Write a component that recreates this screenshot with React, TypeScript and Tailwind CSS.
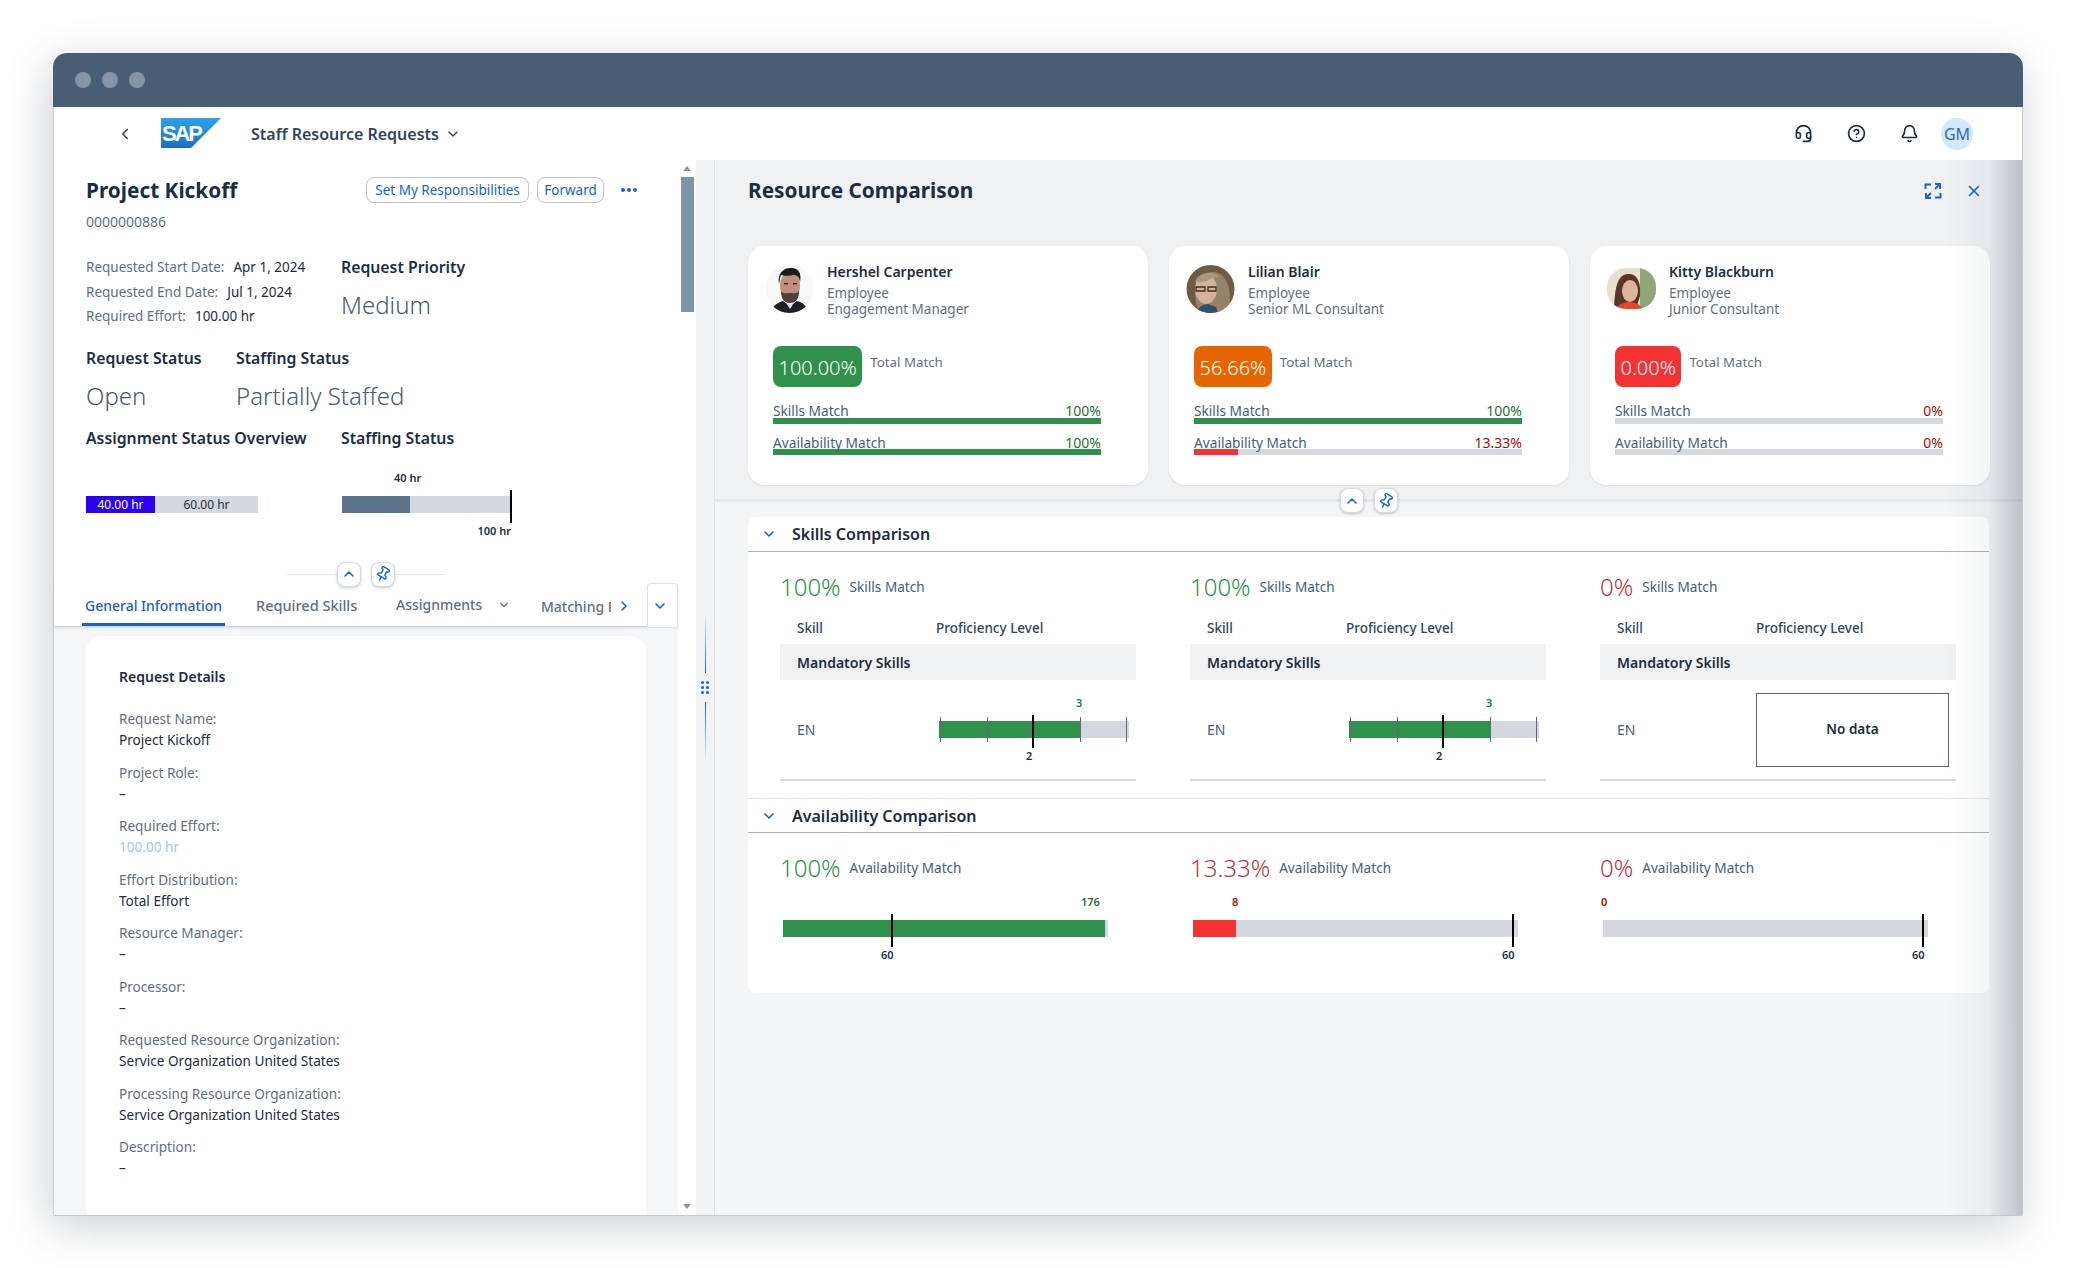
import { Bell, ChevronDown, ChevronLeft, ChevronRight, ChevronUp, CircleHelp, Headset, Pin, X } from "lucide-react";

type Tone = "good" | "warn" | "bad";

const toneBadge: Record<Tone, string> = {
  good: "bg-[#30914c]",
  warn: "bg-[#e76500]",
  bad: "bg-[#f53232]",
};

const toneText: Record<Tone, string> = {
  good: "text-[#256f3a]",
  warn: "text-[#aa0808]",
  bad: "text-[#aa0808]",
};

const barFill: Record<Tone, string> = {
  good: "bg-[#30914c]",
  warn: "bg-[#f53232]",
  bad: "bg-[#f53232]",
};

function SapLogo() {
  return (
    <svg width="60" height="31" viewBox="0 0 60 31" className="shrink-0">
      <defs>
        <linearGradient id="sap" x1="0" y1="0" x2="0" y2="1">
          <stop offset="0" stopColor="#2aa4ea" />
          <stop offset="1" stopColor="#1a6fc2" />
        </linearGradient>
      </defs>
      <polygon points="0,0 60,0 30,30 0,30" fill="url(#sap)" />
      <text x="1" y="23" fontSize="22" fontWeight="800" fill="#fff" fontFamily="'Liberation Sans', sans-serif" letterSpacing="-2.2">
        SAP
      </text>
    </svg>
  );
}

function ExpandIcon() {
  return (
    <svg width="18" height="18" viewBox="0 0 18 18" fill="none" stroke="#1b63c9" strokeWidth="1.9">
      <path d="M1.5 7V2.5H7" />
      <path d="M16.5 11v4.5H11" />
      <path d="M11 2h5v5M16 2l-5 5" />
      <path d="M7 16H2v-5M2 16l5-5" />
    </svg>
  );
}

function Avatar({ who }: { who: 0 | 1 | 2 }) {
  const id = `clip${who}`;
  return (
    <svg width="49" height="48" viewBox="0 0 49 48" className="shrink-0">
      <defs>
        <clipPath id={id}>
          {who === 2 ? <rect x="0" y="3" width="49" height="41" rx="19" /> : <circle cx="24.5" cy="24" r="24" />}
        </clipPath>
        <filter id={`soft${who}`}>
          <feGaussianBlur stdDeviation="0.6" />
        </filter>
      </defs>
      {who === 0 && (
        <g clipPath={`url(#${id})`}>
          <rect width="49" height="48" fill="#f7f8f8" />
          <g filter={`url(#soft${who})`}>
            <path d="M6 48c1-8 8-11 12-12l7 5 7-5c5 1 10 4 11 12z" fill="#1e2226" />
            <path d="M20 36l5 8 5-8z" fill="#e9e6e3" />
            <ellipse cx="25" cy="21" rx="10" ry="14" fill="#c0917a" />
            <path d="M16 26c0 8 3 12 9 12s9-4 9-12c-2 3-5 2-9 2s-7 1-9-2z" fill="#4f423d" />
            <path d="M14 19c-2-11 5-17 13-16 6 0 10 5 8 14-1-5-3-7-6-7-5 1-10 1-13 0-1 2-1 5-2 9z" fill="#1f1d1d" />
            <rect x="19" y="18" width="4" height="1.4" fill="#33292a" />
            <rect x="28" y="18" width="4" height="1.4" fill="#33292a" />
          </g>
        </g>
      )}
      {who === 1 && (
        <g clipPath={`url(#${id})`}>
          <rect width="49" height="48" fill="#6f5a45" />
          <g filter={`url(#soft${who})`}>
            <path d="M14 48c-8-12-7-38 11-41 17-1 22 20 17 41z" fill="#94836b" />
            <ellipse cx="20" cy="24" rx="11" ry="15" fill="#d3b19c" />
            <path d="M9 17c3-9 16-13 25-5-5 0-10 1-13 4-4 1-8 1-12 1z" fill="#a8987f" />
            <path d="M10 22h9v4h-9zM22 22h8v4h-8z" fill="none" stroke="#3a3028" strokeWidth="1.3" />
            <path d="M10 48c2-6 6-8 12-9l8 3 2 6z" fill="#2e4f6e" />
          </g>
        </g>
      )}
      {who === 2 && (
        <g clipPath={`url(#${id})`}>
          <rect width="49" height="48" fill="#e8e0cc" />
          <g filter={`url(#soft${who})`}>
            <rect x="33" y="0" width="16" height="48" fill="#8fa778" />
            <path d="M7 44c1-18 2-34 14-35 11-1 13 12 12 22l-4 13z" fill="#5c3526" />
            <ellipse cx="23" cy="26" rx="8" ry="11" fill="#dfb49c" />
            <path d="M8 44c4-5 8-7 15-7 6 0 10 3 13 7z" fill="#e2492a" />
          </g>
        </g>
      )}
    </svg>
  );
}

function RoundBtn({ children }: { children: React.ReactNode }) {
  return (
    <button className="flex h-[25px] w-[24px] items-center justify-center rounded-lg border border-[#d5dadf] bg-white text-[#1b63c9] shadow-[0_1px_3px_rgba(40,60,80,0.25)]">
      {children}
    </button>
  );
}

function CollapseButtons() {
  return (
    <div className="flex items-center gap-[10px]">
      <RoundBtn>
        <ChevronUp size={16} strokeWidth={2.4} />
      </RoundBtn>
      <RoundBtn>
        <Pin size={16} strokeWidth={2.2} className="rotate-[30deg]" />
      </RoundBtn>
    </div>
  );
}

function Field({ label, value, link }: { label: string; value: string; link?: boolean }) {
  return (
    <div className="h-[53.5px] text-[13.6px] leading-[21px]">
      <div className="text-[#5f6f80]">{label}</div>
      <div className={link ? "text-[#a3c8ee]" : "text-[#1d2d3e]"}>{value}</div>
    </div>
  );
}

function LeftPanel() {
  return (
    <div className="flex w-[642px] shrink-0 bg-white">
      <div className="flex w-[624px] flex-col">
        <div className="pl-[32px]">
          <div className="mt-[17px] flex h-[26px] items-center">
            <h1 className="w-[280px] pt-[1px] text-[20.8px] font-bold text-[#1d2d3e]">Project Kickoff</h1>
            <button className="h-[26px] w-[163px] rounded-lg border border-[#bcc3ca] pt-[1px] text-[13.5px] whitespace-nowrap text-[#1b63c9]">Set My Responsibilities</button>
            <button className="ml-[8px] h-[26px] w-[67px] rounded-lg border border-[#bcc3ca] pt-[1px] text-[13.5px] text-[#1b63c9]">Forward</button>
            <div className="ml-[17px] flex gap-[2px]">
              <span className="h-[4px] w-[4px] rounded-full bg-[#1b63c9]" />
              <span className="h-[4px] w-[4px] rounded-full bg-[#1b63c9]" />
              <span className="h-[4px] w-[4px] rounded-full bg-[#1b63c9]" />
            </div>
          </div>
          <div className="mt-[10px] h-[18px] text-[14px] leading-[18px] text-[#5f6f80]">0000000886</div>

          <div className="mt-[24px] flex">
            <div className="w-[255px] text-[13.5px] leading-[24.5px]">
              <div>
                <span className="text-[#5f6f80]">Requested Start Date:</span>
                <span className="ml-[9px] text-[#1d2d3e]">Apr 1, 2024</span>
              </div>
              <div>
                <span className="text-[#5f6f80]">Requested End Date:</span>
                <span className="ml-[9px] text-[#1d2d3e]">Jul 1, 2024</span>
              </div>
              <div>
                <span className="text-[#5f6f80]">Required Effort:</span>
                <span className="ml-[9px] text-[#1d2d3e]">100.00 hr</span>
              </div>
            </div>
            <div>
              <div className="h-[24px] text-[15.8px] leading-[24px] font-semibold text-[#1d2d3e]">Request Priority</div>
              <div className="mt-[10px] h-[32px] text-[24px] leading-[32px] font-light text-[#4a5a6a]">Medium</div>
            </div>
          </div>

          <div className="mt-[17.5px] flex">
            <div className="w-[150px]">
              <div className="h-[24px] text-[15.8px] leading-[24px] font-semibold text-[#1d2d3e]">Request Status</div>
              <div className="mt-[10px] h-[32px] text-[24px] leading-[32px] font-light text-[#4a5a6a]">Open</div>
            </div>
            <div>
              <div className="h-[24px] text-[15.8px] leading-[24px] font-semibold text-[#1d2d3e]">Staffing Status</div>
              <div className="mt-[10px] h-[32px] text-[24px] leading-[32px] font-light text-[#4a5a6a]">Partially Staffed</div>
            </div>
          </div>

          <div className="mt-[14px] flex">
            <div className="w-[255px]">
              <div className="h-[24px] text-[15.8px] leading-[24px] font-semibold text-[#1d2d3e]">Assignment Status Overview</div>
              <div className="mt-[46px] flex h-[17px] w-[172px] text-[12px] leading-[17px]">
                <div className="w-[69px] bg-[#2b00f0] text-center text-white">40.00 hr</div>
                <div className="flex-1 bg-[#d3d9df] text-center text-[#1d2d3e]">60.00 hr</div>
              </div>
            </div>
            <div>
              <div className="h-[24px] text-[15.8px] leading-[24px] font-semibold text-[#1d2d3e]">Staffing Status</div>
              <div className="relative mt-[46px] ml-[1px] h-[17px] w-[169px] bg-[#d3d9df]">
                <div className="h-full w-[68px] bg-[#5b738b]" />
                <div className="absolute top-[-6px] right-[-1px] h-[33px] w-[2px] bg-black" />
                <span className="absolute top-[-26px] left-[52px] text-[11px] leading-[16px] font-semibold text-[#1d2d3e]">40 hr</span>
                <span className="absolute top-[27px] right-0 text-[11px] leading-[16px] font-semibold whitespace-nowrap text-[#1d2d3e]">100 hr</span>
              </div>
            </div>
          </div>
        </div>

        <div className="mt-[49px] flex h-[24px] items-center justify-center">
          <div className="h-px w-[50px] bg-[#e6e8ea]" />
          <CollapseButtons />
          <div className="h-px w-[50px] bg-[#e6e8ea]" />
        </div>

        <div className="relative -mt-[3px] flex h-[44px] items-stretch border-b border-[#d3d8dc] pl-[28px] text-[14px] font-medium shadow-[0_1px_2px_rgba(40,60,80,0.12)]">
          <div className="flex w-[143px] items-center justify-center border-b-[3px] border-[#1b63c9] pt-[5px] whitespace-nowrap text-[#1b63c9]">General Information</div>
          <div className="ml-[31px] flex w-[103px] items-center pt-[3px] text-[14.5px] whitespace-nowrap text-[#5f6f80]">Required Skills</div>
          <div className="ml-[37px] flex w-[115px] items-center whitespace-nowrap text-[#5f6f80]">
            Assignments
            <ChevronDown size={14} className="ml-auto" />
          </div>
          <div className="ml-[30px] flex w-[91px] items-center pt-[3px] text-[#5f6f80]">
            <span className="w-[70px] overflow-hidden whitespace-nowrap">Matching R</span>
            <ChevronRight size={16} strokeWidth={2.4} className="ml-auto text-[#1b63c9]" />
          </div>
          <div className="absolute top-0 right-0 flex h-[44px] w-[31px] items-center justify-center rounded-t-sm border border-b-0 border-[#dfe3e6] bg-white pr-[6px] text-[#1b63c9]">
            <ChevronDown size={16} strokeWidth={2.4} />
          </div>
        </div>

        <div className="flex-1 overflow-hidden bg-[#f4f6f7] px-[32px] pt-[9px]">
          <div className="h-full w-[560px] rounded-t-2xl bg-white pt-[31px] pl-[33px]">
            <div className="h-[20px] text-[14px] leading-[20px] font-semibold text-[#1d2d3e]">Request Details</div>
            <div className="mt-[21px]">
              <Field label="Request Name:" value="Project Kickoff" />
              <Field label="Project Role:" value="–" />
              <Field label="Required Effort:" value="100.00 hr" link />
              <Field label="Effort Distribution:" value="Total Effort" />
              <Field label="Resource Manager:" value="–" />
              <Field label="Processor:" value="–" />
              <Field label="Requested Resource Organization:" value="Service Organization United States" />
              <Field label="Processing Resource Organization:" value="Service Organization United States" />
              <Field label="Description:" value="–" />
            </div>
          </div>
        </div>
      </div>

      <div className="flex w-[18px] flex-col items-center">
        <div className="mt-[6px] h-0 w-0 border-x-[4px] border-b-[5px] border-x-transparent border-b-[#8a97a3]" />
        <div className="mt-[6px] h-[135px] w-[13px] bg-[#7b93ab]" />
        <div className="mt-auto mb-[6px] h-0 w-0 border-x-[4px] border-t-[5px] border-x-transparent border-t-[#8a97a3]" />
      </div>
    </div>
  );
}

function Splitter() {
  return (
    <div className="flex w-[18px] shrink-0 flex-col items-center justify-center gap-[8px] bg-[#f0f2f4]">
      <div className="h-[60px] w-px bg-gradient-to-b from-transparent to-[#1b63c9]" />
      <div className="grid grid-cols-2 gap-[2px]">
        {[0, 1, 2, 3, 4, 5].map((i) => (
          <span key={i} className="h-[3px] w-[3px] rounded-full bg-[#1b63c9]" />
        ))}
      </div>
      <div className="h-[60px] w-px bg-gradient-to-t from-transparent to-[#1b63c9]" />
    </div>
  );
}

function MatchRow({ label, value, pct, tone, h }: { label: string; value: string; pct: number; tone: Tone; h: string }) {
  return (
    <div>
      <div className={`flex justify-between ${h}`}>
        <span className="text-[13.7px] text-[#475e75]">{label}</span>
        <span className={`text-[14px] ${toneText[tone]}`}>{value}</span>
      </div>
      <div className="h-[6px] bg-[#d3d9df]">
        <div className={`h-full ${barFill[tone]}`} style={{ width: `${pct}%` }} />
      </div>
    </div>
  );
}

const people = [
  { name: "Hershel Carpenter", role: "Engagement Manager", total: "100.00%", tone: "good" as Tone, skills: 100, avail: 100, availLabel: "100%", skillTone: "good" as Tone, availTone: "good" as Tone },
  { name: "Lilian Blair", role: "Senior ML Consultant", total: "56.66%", tone: "warn" as Tone, skills: 100, avail: 13.33, availLabel: "13.33%", skillTone: "good" as Tone, availTone: "bad" as Tone },
  { name: "Kitty Blackburn", role: "Junior Consultant", total: "0.00%", tone: "bad" as Tone, skills: 0, avail: 0, availLabel: "0%", skillTone: "bad" as Tone, availTone: "bad" as Tone },
];

function PersonCard({ index }: { index: 0 | 1 | 2 }) {
  const p = people[index];
  return (
    <div className="h-[239px] w-[400px] rounded-2xl bg-white pt-[16px] pr-[47px] pl-[25px] shadow-[0_1px_2px_rgba(40,60,80,0.1)]">
      <div className="-ml-[8px] flex">
        <div className="mt-[3px] w-[62px]">
          <Avatar who={index} />
        </div>
        <div>
          <div className="h-[20px] text-[14px] leading-[20px] font-semibold text-[#1d2d3e]">{p.name}</div>
          <div className="mt-[3px] text-[13.5px] leading-[16px] text-[#5f6f80]">Employee</div>
          <div className="text-[13.5px] leading-[16px] text-[#5f6f80]">{p.role}</div>
        </div>
      </div>
      <div className="mt-[29px] flex">
        <div className={`flex h-[41px] items-center rounded-lg px-[5.5px] pt-[3px] text-[20px] font-light text-white ${toneBadge[p.tone]}`}>{p.total}</div>
        <div className="ml-[8px] pt-[6px] text-[13.3px] leading-[20px] text-[#5f6f80]">Total Match</div>
      </div>
      <div className="mt-[15px] flex flex-col gap-[10px]">
        <MatchRow label="Skills Match" value={`${p.skills}%`} pct={p.skills} tone={p.skillTone} h="h-[16px] leading-[18px]" />
        <MatchRow label="Availability Match" value={p.availLabel} pct={p.avail} tone={p.availTone} h="h-[15px] leading-[17px]" />
      </div>
    </div>
  );
}

function BigStat({ value, tone, label }: { value: string; tone: Tone; label: string }) {
  return (
    <div className="flex h-[32px] items-center">
      <span className={`text-[24px] leading-[32px] font-light ${tone === "good" ? "text-[#30914c]" : "text-[#b23a3f]"}`}>{value}</span>
      <span className="ml-[9px] text-[13.6px] text-[#475e75]">{label}</span>
    </div>
  );
}

function SkillBullet() {
  const ticks = [1, 47.5, 140.5, 186.5];
  return (
    <div className="relative h-[17px] w-[190px] bg-[#d3d9df]">
      <div className="h-full w-[141px] bg-[#30914c]" />
      {ticks.map((t) => (
        <div key={t} className="absolute top-[-4px] h-[25px] w-px bg-[#5b6b7b]" style={{ left: t }} />
      ))}
      <div className="absolute top-[-6px] left-[93px] h-[33px] w-[2px] bg-black" />
      <span className="absolute top-[-26px] left-[137px] text-[11px] leading-[16px] font-semibold text-[#256f3a]">3</span>
      <span className="absolute top-[27px] left-[87px] text-[11px] leading-[16px] font-semibold text-[#1d2d3e]">2</span>
    </div>
  );
}

function SkillsColumn({ value, tone, noData }: { value: string; tone: Tone; noData?: boolean }) {
  return (
    <div className="w-[356px]">
      <BigStat value={value} tone={tone} label="Skills Match" />
      <div className="mt-[13px] flex h-[24px] items-center pl-[17px] text-[13.5px] font-medium text-[#32465a]">
        <span className="w-[139px]">Skill</span>
        <span>Proficiency Level</span>
      </div>
      <div className="mt-[4px] flex h-[36px] items-center bg-[#eff1f2] pl-[17px] text-[14px] font-semibold text-[#1d2d3e]">Mandatory Skills</div>
      <div className="flex h-[101px] items-center border-b-2 border-[#d5dadd] pl-[17px]">
        <span className="w-[139px] text-[14px] text-[#475e75]">EN</span>
        {noData ? (
          <div className="flex h-[74px] w-[193px] items-center justify-center border border-[#5a6570] text-[13.5px] font-semibold text-[#1d2d3e]">No data</div>
        ) : (
          <div className="ml-[3px]">
            <SkillBullet />
          </div>
        )}
      </div>
    </div>
  );
}

function AvailabilityColumn({ value, tone, pct, actual, marker, actualLeft }: { value: string; tone: Tone; pct: number; actual: string; marker: number; actualLeft: number }) {
  return (
    <div className="w-[356px]">
      <BigStat value={value} tone={tone} label="Availability Match" />
      <div className="relative mt-[36px] ml-[3px] h-[17px] w-[325px] bg-[#d3d9df]">
        <div className={`h-full ${barFill[tone]}`} style={{ width: `${pct}%` }} />
        <div className="absolute top-[-6px] h-[33px] w-[2px] bg-black" style={{ left: marker }} />
        <span className={`absolute top-[-26px] text-[11px] leading-[16px] font-semibold ${tone === "good" ? "text-[#256f3a]" : "text-[#aa0808]"}`} style={{ left: actualLeft }}>
          {actual}
        </span>
        <span className="absolute top-[27px] text-[11px] leading-[16px] font-semibold text-[#1d2d3e]" style={{ left: marker - 10 }}>
          60
        </span>
      </div>
    </div>
  );
}

function SectionHeader({ title, h }: { title: string; h: string }) {
  return (
    <div className={`flex items-center border-b border-[#a8b2bd] pl-[13px] ${h}`}>
      <ChevronDown size={16} strokeWidth={2.4} className="text-[#1b63c9]" />
      <span className="ml-[15px] text-[16px] font-semibold text-[#1d2d3e]">{title}</span>
    </div>
  );
}

function RightPanel() {
  return (
    <div className="relative flex min-w-0 flex-1 flex-col overflow-hidden border-l border-[#dfe3e6] bg-[#f4f5f6]">
      <div className="h-[342px] shrink-0 border-b-[3px] border-[#e4e6e9] bg-[#eff1f3] pl-[33px]">
        <div className="flex h-[62px] items-center justify-between pr-[39px]">
          <h2 className="text-[20.8px] font-bold text-[#1d2d3e]">Resource Comparison</h2>
          <div className="flex items-center gap-[23px]">
            <ExpandIcon />
            <X size={18} strokeWidth={2.2} className="text-[#1b63c9]" />
          </div>
        </div>
        <div className="mt-[24px] flex gap-[21px]">
          <PersonCard index={0} />
          <PersonCard index={1} />
          <PersonCard index={2} />
        </div>
      </div>

      <div className="absolute top-[328px] left-1/2 -translate-x-1/2">
        <CollapseButtons />
      </div>

      <div className="mt-[15px] ml-[33px] h-[476px] w-[1241px] rounded-lg bg-white">
        <SectionHeader title="Skills Comparison" h="h-[35px]" />
        <div className="flex gap-[54px] border-b border-[#e4e6e9] pt-[19px] pb-[17px] pl-[32px]">
          <SkillsColumn value="100%" tone="good" />
          <SkillsColumn value="100%" tone="good" />
          <SkillsColumn value="0%" tone="bad" noData />
        </div>
        <SectionHeader title="Availability Comparison" h="h-[34px]" />
        <div className="flex gap-[54px] pt-[19px] pl-[32px]">
          <AvailabilityColumn value="100%" tone="good" pct={99} actual="176" marker={108} actualLeft={298} />
          <AvailabilityColumn value="13.33%" tone="bad" pct={13.33} actual="8" marker={319} actualLeft={39} />
          <AvailabilityColumn value="0%" tone="bad" pct={0} actual="0" marker={319} actualLeft={-2} />
        </div>
      </div>

      <div className="pointer-events-none absolute inset-y-0 right-0 w-[75px] bg-gradient-to-r from-transparent via-[#1d2d3e]/5 via-55% to-[#1d2d3e]/25" />
    </div>
  );
}

export default function App() {
  return (
    <div className="h-[1268px] w-[2076px] overflow-hidden bg-white pt-[53px] pl-[53px] font-['Noto_Sans',sans-serif]">
      <div className="flex h-[1163px] w-[1970px] flex-col overflow-hidden rounded-t-[14px] rounded-b-[2px] bg-white shadow-[-4px_10px_44px_rgba(40,55,70,0.24)]">
        <div className="flex h-[54px] shrink-0 items-center gap-[11px] bg-[#485e74] pl-[22px]">
          <span className="h-[16px] w-[16px] rounded-full bg-[#8595a5]" />
          <span className="h-[16px] w-[16px] rounded-full bg-[#8595a5]" />
          <span className="h-[16px] w-[16px] rounded-full bg-[#8595a5]" />
        </div>

        <div className="flex h-[53px] shrink-0 items-center border-x border-[#c3c9cf] pr-[49px] pl-[62px]">
          <ChevronLeft size={18} strokeWidth={2.2} className="text-[#32465a]" />
          <div className="ml-[27px]">
            <SapLogo />
          </div>
          <span className="ml-[30px] text-[16px] font-semibold text-[#32465a]">Staff Resource Requests</span>
          <ChevronDown size={16} strokeWidth={2} className="ml-[6px] text-[#32465a]" />
          <div className="ml-auto flex items-center">
            <Headset size={19} strokeWidth={2.1} className="text-[#1d2d3e]" />
            <CircleHelp size={19} strokeWidth={2.1} className="ml-[34px] text-[#1d2d3e]" />
            <Bell size={19} strokeWidth={2.1} className="ml-[34px] text-[#1d2d3e]" />
            <div className="ml-[22px] flex h-[32px] w-[32px] items-center justify-center rounded-full bg-[#d1e8ff] text-[16px] text-[#2f6cc0]">GM</div>
          </div>
        </div>

        <div className="flex min-h-0 flex-1 border-x border-b border-[#c3c9cf]">
          <LeftPanel />
          <Splitter />
          <RightPanel />
        </div>
      </div>
    </div>
  );
}
